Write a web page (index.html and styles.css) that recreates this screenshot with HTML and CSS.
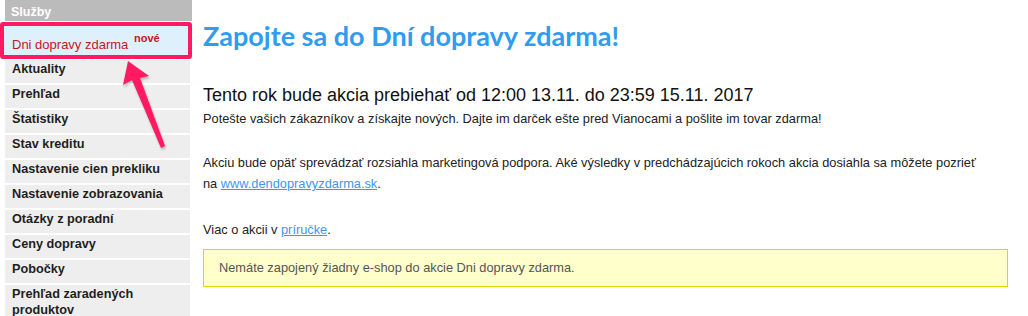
FILE: index.html
```html
<!DOCTYPE html>
<html lang="sk">
<head>
    <meta charset="UTF-8">
    <title>Dni dopravy zdarma</title>
    <link rel="stylesheet" href="styles.css">
</head>
<body>
    <div class="page">
        <!-- -----------Menu------------ -->
        <div class="sidebar">
            <div class="menu-head">Služby</div>
            <a class="menu-item active" href="#">Dni dopravy zdarma <sup>nové</sup></a>
            <a class="menu-item" href="#">Aktuality</a>
            <a class="menu-item" href="#">Prehľad</a>
            <a class="menu-item" href="#">Štatistiky</a>
            <a class="menu-item" href="#">Stav kreditu</a>
            <a class="menu-item" href="#">Nastavenie cien prekliku</a>
            <a class="menu-item" href="#">Nastavenie zobrazovania</a>
            <a class="menu-item" href="#">Otázky z poradní</a>
            <a class="menu-item" href="#">Ceny dopravy</a>
            <a class="menu-item" href="#">Pobočky</a>
            <a class="menu-item tall" href="#">Prehľad zaradených produktov</a>

            <svg class="arrow" width="200" height="160" viewBox="0 0 200 160">
                <polygon points="128,61 149,76 140,78 165,146 161,148 132,80 123,85" fill="#ff1a62"/>
            </svg>
        </div>

        <!-- -----------Content------------ -->
        <div class="main">
            <h1 class="title">Zapojte sa do Dní dopravy zdarma!</h1>
            <h2 class="subtitle">Tento rok bude akcia prebiehať od 12:00 13.11. do 23:59 15.11. 2017</h2>
            <p class="lead">Potešte vašich zákazníkov a získajte nových. Dajte im darček ešte pred Vianocami a pošlite im tovar zdarma!</p>
            <p class="gap">Akciu bude opäť sprevádzať rozsiahla marketingová podpora. Aké výsledky v predchádzajúcich rokoch akcia dosiahla sa môžete pozrieť na <a href="#">www.dendopravyzdarma.sk</a>.</p>
            <p class="gap more">Viac o akcii v <a href="#">príručke</a>.</p>
            <div class="notice">Nemáte zapojený žiadny e-shop do akcie Dni dopravy zdarma.</div>
        </div>
    </div>
</body>
</html>
```

FILE: styles.css
```css
*{
    margin: 0;
    padding: 0;
    box-sizing: border-box;
}
body{
    font-family: "Liberation Sans", Arial, sans-serif;
    font-size: 12.8px;
    color: #222;
    background: #fff;
}
.page{
    display: flex;
    align-items: flex-start;
}
.sidebar{
    position: relative;
    width: 187px;
    margin-left: 5px;
    flex-shrink: 0;
    display: flex;
    flex-direction: column;
}
.menu-head{
    height: 21px;
    padding: 5px 6px 0;
    background: #bbb;
    color: #fff;
    font-weight: bold;
    font-size: 12.5px;
}
.menu-item{
    display: block;
    height: 23px;
    margin-top: 2px;
    margin-right: 2px;
    padding: 2px 7px 0;
    background: #eee;
    color: #1e1e1e;
    font-weight: bold;
    font-size: 12.7px;
    text-decoration: none;
}
.menu-item.tall{
    height: auto;
    line-height: 16px;
    padding: 1px 7px 2px;
}
.menu-item.active{
    height: 37px;
    margin: 1px 0 0 -5px;
    padding: 8px 0 0 8px;
    border: 4px solid #ff1a62;
    border-radius: 3px;
    background: #def0fc;
    color: #c8161d;
    font-weight: normal;
    font-size: 13px;
}
.menu-item.active + .menu-item{
    margin-top: 1px;
}
.menu-item.active sup{
    margin-left: 2px;
    font-size: 11px;
    font-weight: bold;
    position: relative;
    top: -2px;
}
.arrow{
    position: absolute;
    left: -5px;
    top: 0;
    filter: drop-shadow(1px 2px 1px rgba(0, 0, 0, 0.25));
    pointer-events: none;
}
.main{
    flex: 1;
    margin-left: 11px;
    margin-right: 20px;
}
.main p{
    padding-right: 22px;
}
.title{
    margin-top: 19px;
    font-family: Lato, "DejaVu Sans", sans-serif;
    font-size: 27px;
    font-weight: bold;
    color: #2f9cf0;
}
.subtitle{
    margin-top: 33px;
    font-size: 18px;
    font-weight: normal;
    color: #111;
}
p{
    line-height: 21px;
}
.lead{
    margin-top: 2px;
}
.gap{
    margin-top: 23px;
}
.gap.more{
    margin-top: 25px;
}
a{
    color: #3d97f2;
}
.notice{
    margin-top: 9px;
    height: 38px;
    padding: 10px 15px;
    background: #ffffcc;
    border: 1px solid #dada00;
    color: #555;
}
```
